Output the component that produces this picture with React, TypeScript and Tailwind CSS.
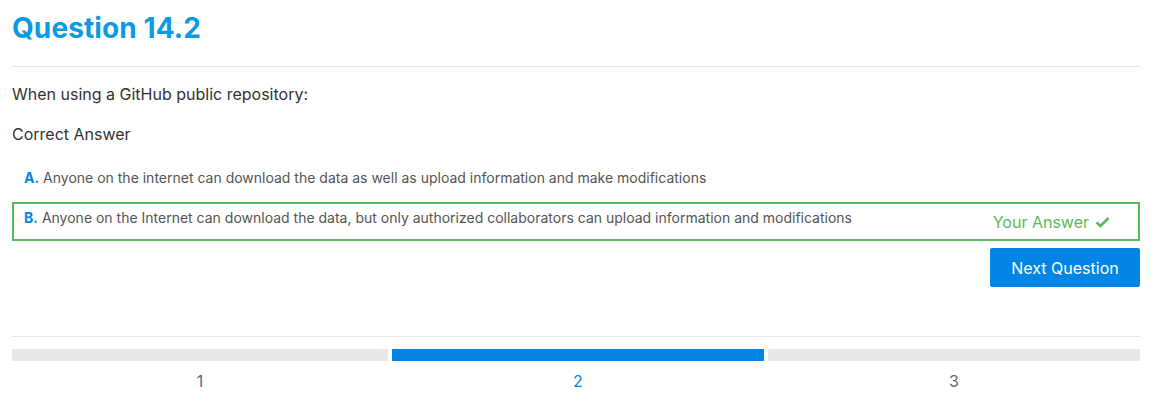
import React from "react";

export default function App() {
  return (
    <div className="bg-white w-[1154px] h-[408px] pl-3 pr-[14px] text-[#333]" style={{ fontFamily: "Inter, 'Noto Sans', sans-serif" }}>
      <h1 className="text-[28px] font-bold text-[#0b9be3] leading-[34px] pt-[11px] pb-[21px] tracking-[0.1px]">Question 14.2</h1>
      <div className="border-t border-[#e5e5e5]" />
      <p className="text-[16px] leading-[24px] mt-[15px]">When using a GitHub public repository:</p>
      <p className="text-[16px] leading-[24px] mt-[16px]">Correct Answer</p>
      <div className="mt-[15px] flex flex-col">
        <div className="px-3 py-[7px] text-[14px] leading-[20px] text-[#555]">
          <span className="font-bold text-[#0285e5]">A.</span> Anyone on the internet can download the data as well as upload information and make modifications
        </div>
        <div className="mt-[7px] border-2 border-[#5cb85c] px-[10px] flex items-start justify-between h-[39px]">
          <div className="text-[14px] leading-[20px] text-[#555] pt-[4px]">
            <span className="font-bold text-[#0285e5]">B.</span> Anyone on the Internet can download the data, but only authorized collaborators can upload information and modifications
          </div>
          <div className="flex items-center gap-[6px] text-[16px] text-[#5cb85c] pt-[7px] pr-[18px] leading-[22px]">
            <span>Your Answer</span>
            <svg width="15" height="12" viewBox="0 0 15 12">
              <path d="M1.5 6.5 L5.5 10 L13.5 2" stroke="#5cb85c" strokeWidth="2.6" fill="none" />
            </svg>
          </div>
        </div>
      </div>
      <div className="flex justify-end mt-[7px]">
        <button className="bg-[#0285e5] text-white text-[16px] w-[150px] h-[39px] rounded-[2px]">Next Question</button>
      </div>
      <div className="border-t border-[#e5e5e5] mt-[49px]" />
      <div className="grid grid-cols-[376px_1fr_1fr] gap-1 mt-[12px]">
        <div className="flex flex-col items-center">
          <div className="w-full h-[12px] bg-[#e8e8e8]" />
          <span className="text-[16px] text-[#666] mt-[8px] leading-[24px]">1</span>
        </div>
        <div className="flex flex-col items-center">
          <div className="w-full h-[12px] bg-[#0285e5]" />
          <span className="text-[16px] text-[#0285e5] mt-[8px] leading-[24px]">2</span>
        </div>
        <div className="flex flex-col items-center">
          <div className="w-full h-[12px] bg-[#e8e8e8]" />
          <span className="text-[16px] text-[#666] mt-[8px] leading-[24px]">3</span>
        </div>
      </div>
    </div>
  );
}
